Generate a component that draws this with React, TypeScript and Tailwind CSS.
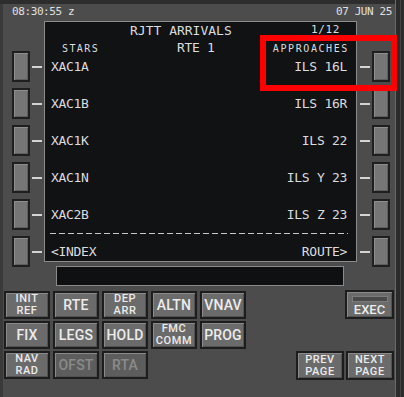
const screenFont = { fontFamily: '"DejaVu Sans Mono", "Liberation Mono", monospace' };
const keyFont = { fontFamily: 'Roboto, "Liberation Sans", sans-serif' };

function Lsk({ side }: { side: 'left' | 'right' }) {
  const btn = (
    <div className="w-[18px] h-[31px] border-2 border-[#1f1f1f] bg-[#767676] shadow-[inset_1px_1px_0_#8e8e8e,inset_-1px_-1px_0_#5e5e5e]" />
  );
  const dash = <div className="w-[10px] h-[2px] bg-[#d4d4d4]" />;
  return side === 'left' ? (
    <div className="flex items-center gap-[2px]">
      {btn}
      {dash}
    </div>
  ) : (
    <div className="flex items-center gap-[2px]">
      {dash}
      {btn}
    </div>
  );
}

function Key({ lines, disabled }: { lines: string[]; disabled?: boolean }) {
  const two = lines.length > 1;
  return (
    <div
      className={`h-full flex flex-col items-center justify-center border-2 border-[#1d1d1d] shadow-[inset_1px_1px_0_#8a8a8a,inset_-1px_-1px_0_#525252] ${
        disabled ? 'bg-[#5d5d5d] text-[#8b8b8b]' : 'bg-[#6b6b6b] text-[#ececec]'
      }`}
      style={keyFont}
    >
      {lines.map((l) => (
        <span
          key={l}
          className={
            two
              ? 'text-[11px] leading-[12px] font-medium tracking-[0.6px]'
              : 'text-[14px] leading-[15px] font-medium tracking-[0.2px]'
          }
        >
          {l}
        </span>
      ))}
    </div>
  );
}

const rows = [
  { l: 'XAC1A', r: 'ILS 16L' },
  { l: 'XAC1B', r: 'ILS 16R' },
  { l: 'XAC1K', r: 'ILS 22' },
  { l: 'XAC1N', r: 'ILS Y 23' },
  { l: 'XAC2B', r: 'ILS Z 23' },
];

export default function App() {
  return (
    <div className="relative w-[404px] h-[397px] bg-[#4c4c4c] flex overflow-hidden text-[#dcdcdc]">
      <div className="w-[395px] flex flex-col border-l-[3px] border-[#3a3a3a]">
        {/* top strip */}
        <div className="h-[4px] bg-[#2d2d2d] -ml-[3px]" />

        {/* clock / date */}
        <div
          className="h-[17px] flex items-center justify-between pl-[9px] pr-[3px] text-[11px] tracking-[-0.4px] text-[#e0e0e0]"
          style={screenFont}
        >
          <span>08:30:55 z</span>
          <span>07 JUN 25</span>
        </div>

        {/* LSKs + display */}
        <div className="h-[241px] flex">
          <div className="w-[41px] pl-[9px] pt-[30px] flex flex-col gap-[6px]">
            {[0, 1, 2, 3, 4, 5].map((i) => (
              <Lsk key={i} side="left" />
            ))}
          </div>

          <div
            className="w-[313px] h-full border border-[#8c8c8c] bg-[#111214] flex flex-col text-[13px] tracking-[-0.3px]"
            style={screenFont}
          >
            <div className="h-[17px] flex items-center">
              <span className="ml-[85px] tracking-[0px]">RJTT ARRIVALS</span>
              <span className="ml-auto mr-[16px] text-[11px] tracking-[0.6px]">1/12</span>
            </div>
            {rows.map((row, i) => (
              <div key={row.l}>
                <div className="h-[18px] flex items-center">
                  {i === 0 && (
                    <>
                      <span className="w-[132px] pl-[17px] text-[10px] tracking-[1.4px]">STARS</span>
                      <span>RTE 1</span>
                      <span className="ml-auto pr-[7px] text-[10px] tracking-[1.6px]">APPROACHES</span>
                    </>
                  )}
                </div>
                <div className="h-[19px] flex items-center justify-between pl-[6px] pr-[9px]">
                  <span>{row.l}</span>
                  <span>{row.r}</span>
                </div>
              </div>
            ))}
            <div className="h-[18px] flex items-center pl-[5px] pr-[8px]">
              <div className="w-full h-px bg-[repeating-linear-gradient(90deg,#c8c8c8_0_6px,transparent_6px_9px)]" />
            </div>
            <div className="h-[19px] flex items-center justify-between pl-[6px] pr-[9px]">
              <span>&lt;INDEX</span>
              <span>ROUTE&gt;</span>
            </div>
          </div>

          <div className="w-[38px] pl-[3px] pt-[30px] flex flex-col gap-[6px]">
            {[0, 1, 2, 3, 4, 5].map((i) => (
              <Lsk key={i} side="right" />
            ))}
          </div>
        </div>

        {/* scratchpad */}
        <div className="h-[26px] pt-[4px] pl-[53px]">
          <div className="w-[288px] h-[20px] border border-[#8a8a8a] bg-[#0f1012]" />
        </div>

        {/* keys */}
        <div className="flex-1 flex pt-[2px] pl-[1px] pr-[1px]">
          <div className="mt-[1px] grid grid-cols-[repeat(5,46px)] grid-rows-[repeat(3,28px)] gap-x-[3px] gap-y-[2px]">
            <Key lines={['INIT', 'REF']} />
            <Key lines={['RTE']} />
            <Key lines={['DEP', 'ARR']} />
            <Key lines={['ALTN']} />
            <Key lines={['VNAV']} />
            <Key lines={['FIX']} />
            <Key lines={['LEGS']} />
            <Key lines={['HOLD']} />
            <Key lines={['FMC', 'COMM']} />
            <Key lines={['PROG']} />
            <Key lines={['NAV', 'RAD']} />
            <Key lines={['OFST']} disabled />
            <Key lines={['RTA']} disabled />
          </div>

          <div className="ml-auto w-[98px] h-[90px] flex flex-col justify-between">
            <div className="self-end w-[49px] h-[29px] flex flex-col items-center border-2 border-[#1d1d1d] bg-[#6b6b6b] shadow-[inset_1px_1px_0_#8a8a8a,inset_-1px_-1px_0_#525252]">
              <div className="mt-[4px] w-[36px] h-[6px] bg-[#4a4a4a] border border-[#7c7c7c]" />
              <span className="text-[13px] leading-[14px] mt-[1px] font-medium text-[#ececec]" style={keyFont}>
                EXEC
              </span>
            </div>
            <div className="h-[29px] grid grid-cols-2 gap-[2px]">
              <Key lines={['PREV', 'PAGE']} />
              <Key lines={['NEXT', 'PAGE']} />
            </div>
          </div>
        </div>
      </div>

      {/* right edge */}
      <div className="w-[9px] bg-[#2b2b2b] border-l border-[#6a6a6a] flex justify-center">
        <div className="w-px h-full bg-[#444]" />
      </div>

      {/* highlight box */}
      <div className="absolute left-[260px] top-[35px] w-[137px] h-[56px] border-[6px] border-[#ff0000]" />
    </div>
  );
}
